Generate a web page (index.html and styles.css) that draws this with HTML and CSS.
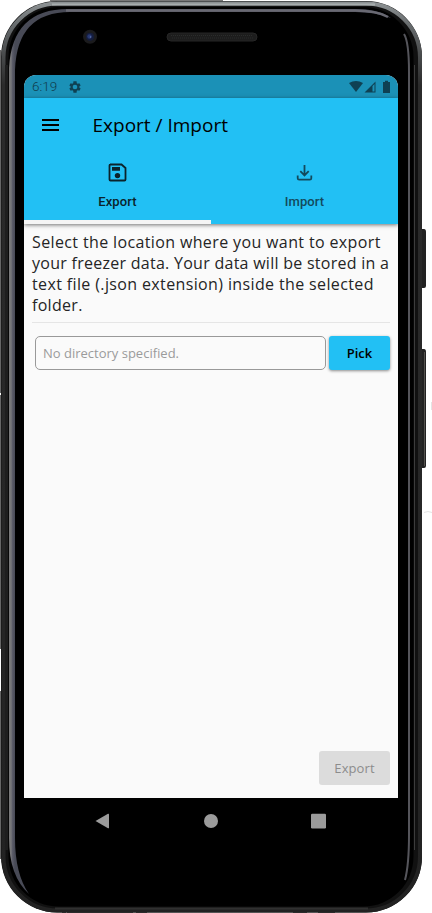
FILE: index.html
```html
<!DOCTYPE html>
<html lang="en">
<head>
<meta charset="utf-8">
<title>Export / Import</title>
<link rel="stylesheet" href="styles.css">
</head>
<body>
<div class="phone">
  <svg class="bezel" width="432" height="913" viewBox="0 0 432 913" aria-hidden="true">
    <defs>
      <linearGradient id="topRim" x1="0" y1="0" x2="0" y2="1">
        <stop offset="0" stop-color="#8b9092"/><stop offset=".025" stop-color="#666a6c"/><stop offset=".09" stop-color="#2b2b2b"/><stop offset="1" stop-color="#222"/>
      </linearGradient>
      <linearGradient id="leftRail" gradientUnits="userSpaceOnUse" x1="9" y1="0" x2="15" y2="0"><stop offset="0" stop-color="#777"/><stop offset=".35" stop-color="#77777a"/><stop offset=".55" stop-color="#5c5d69"/><stop offset="1" stop-color="#484a56"/></linearGradient>
    </defs>
    <path d="M0 50V393M0 395V649M0 691V859" stroke="#666" stroke-width="2"/>
    <path d="M50 .5H223" stroke="#777"/>
    <path d="M422 229h2q2 0 2 3v54q0 2-2 2h-2zM422 349h2q2 0 2 3v114q0 2-2 2h-2z" fill="#222"/>
    <path d="M424.500 352v114" stroke="#55534f"/>
    <path d="M431.500 402v8M424 512.500q4-2 8 0" stroke="#e4e4e4" fill="none"/>
    <rect x="1" y="1" width="421" height="911.500" rx="56" fill="#111"/>
    <rect x="3.500" y="3.500" width="416.500" height="907" rx="54" fill="none" stroke="url(#topRim)" stroke-width="4"/>
    <path d="M52 4.500H375" stroke="#a7adae" stroke-width="2"/>
    <path d="M6.500 65V850" stroke="#1e1e1e" stroke-width="3"/>
    <rect x="8.500" y="7" width="405" height="899.500" rx="50" fill="#000"/>
    <path d="M9 68Q12 9 68 9H355Q379 9 391 18Q376 12 355 12H70Q17 12 15 70V838Q15 874 29 894Q9 876 9 838Z" fill="url(#leftRail)"/>
    <path d="M66 10.500H355Q376 10.500 388 17" fill="none" stroke="#696973" stroke-width="2.500"/>
    <path d="M404 34Q409 42 409 72V835Q409 865 405 880" fill="none" stroke="#55555b" stroke-width="2"/>
    <path d="M414.500 65V850" stroke="#3c3c3c"/>
    <path d="M55 908.500H368" stroke="#303030" stroke-width="2"/>
    <path d="M62 912.500h4M67 912.500h66M136 912.500h11M293 912.500h14M318 912.500h17" stroke="#2b2b2b"/>
    <circle cx="90" cy="36.700" r="7" fill="#1b1b1d"/>
    <circle cx="90" cy="36.700" r="4" fill="#151d3c"/>
    <circle cx="89.500" cy="36.500" r="2.200" fill="#273873"/>
    <circle cx="90.500" cy="37" r=".8" fill="#6478ad"/>
    <rect x="167" y="33" width="90" height="8" rx="4" fill="#1d1d1d" stroke="#262626"/>
    <path d="M171 35.500H253M172 38H253" stroke="#2b2d2c" stroke-dasharray="1 1"/>
  </svg>

  <main class="screen">
    <div class="status">
      <span class="clock">6:19</span>
      <svg class="gear" width="14" height="14" viewBox="0 0 24 24"><path fill="currentColor" fill-rule="evenodd" d="M19.400 13a7.500 7.500 0 0 0 0-2l2.300-1.700-2.200-3.900-2.700 1.100-1.700-1L14.700 2H9.300l-.4 3.500-1.700 1-2.700-1.100-2.200 3.900L4.600 11a7.500 7.500 0 0 0 0 2l-2.300 1.700 2.200 3.900 2.700-1.100 1.700 1 .4 3.500h5.400l.4-3.500 1.700-1 2.700 1.100 2.200-3.900zM12 16a4 4 0 1 1 0-8 4 4 0 0 1 0 8"/></svg>
      <svg class="signals" width="42" height="14" viewBox="0 0 42 14"><g fill="currentColor"><path d="M0 3Q7-1 14 3L7 12z"/><path d="M15.500 12.500 26.500 1.500v11zM23.500 6v5.500h2V4z" fill-rule="evenodd"/><path d="M34 2h2V.8h3V2h2v11h-7z"/></g></svg>
    </div>
    <header class="appbar">
      <div class="toolbar">
        <svg class="menu" width="17" height="12" viewBox="0 0 17 12"><path d="M0 1h17M0 6h17M0 11h17" stroke="#000" stroke-width="2"/></svg>
        <h1 class="title">Export / Import</h1>
      </div>
      <nav class="tabs">
        <div class="tab active">
          <svg width="21" height="21" viewBox="0 0 21 21"><path d="M3 2.500h11.500L18.500 6v11.500q0 1-1 1H3.500q-1 0-1-1V3.500q0-1 1-1z" fill="none" stroke="currentColor" stroke-width="1.800"/><path d="M5 5h8v3.700h-8z" fill="currentColor"/><circle cx="10.500" cy="13.600" r="2.700" fill="currentColor"/></svg>
          <span class="label">Export</span>
        </div>
        <div class="tab">
          <svg width="21" height="21" viewBox="0 0 21 21"><path d="M10.500 3v10M6.300 9.200l4.200 4.200 4.200-4.200M3.700 13.500v2.700q0 1.500 1.500 1.500h10.600q1.500 0 1.500-1.500v-2.700" fill="none" stroke="currentColor" stroke-width="1.800"/></svg>
          <span class="label">Import</span>
        </div>
      </nav>
    </header>
    <section class="content">
      <p class="intro">
        <span class="line one">Select the location where you want to export</span>
        <span class="line two">your freezer data. Your data will be stored in a</span>
        <span class="line three">text file (.json extension) inside the selected</span>
        <span class="line four">folder.</span>
      </p>
      <div class="picker">
        <div class="field"><span class="hint">No directory specified.</span></div>
        <button class="btn pick">Pick</button>
      </div>
      <button class="btn export" disabled>Export</button>
    </section>
  </main>
  <div class="navbar">
    <svg width="232" height="16" viewBox="0 0 232 16"><g fill="#9b9b9b"><path d="M.5 8 13 .8Q14 .3 14 1.500v13q0 1.200-1 .7z"/><circle cx="116" cy="8" r="7"/><rect x="216" y=".7" width="15" height="14.700" rx="1.200"/></g></svg>
  </div>
</div>
</body>
</html>
```
FILE: styles.css
```css
* { box-sizing: border-box; }
body { margin: 0; background: #fff; font-family: "Open Sans", sans-serif; }
.phone { position: relative; width: 432px; height: 913px; padding: 75px 34px 0 24px; overflow: hidden; }
.bezel { position: absolute; top: 0; left: 0; }
.screen { position: relative; display: flex; flex-direction: column; width: 374px; height: 723px; background: #fafafa; border-radius: 12px 12px 0 0; overflow: hidden; }
.status { display: flex; align-items: center; height: 23px; flex: none; padding: 0 7px 0 8px; background: #1b91b7; color: #0f4153; }
.clock { width: 36px; font: 300 13.5px/23px Roboto, sans-serif; color: #103c4c; }
.signals { margin-left: auto; }
.appbar { height: 126px; flex: none; background: #22c0f4; box-shadow: 0 1px 4px rgba(0,0,0,.55); }
.toolbar { display: flex; align-items: center; height: 54px; padding-left: 18px; }
.title { margin: 0 0 0 33.5px; font-size: 19px; line-height: 26px; font-weight: 400; color: #000; white-space: nowrap; }
.tabs { display: grid; grid-template-columns: 1fr 1fr; height: 72px; }
.tab { display: flex; flex-direction: column; align-items: center; padding-top: 10px; color: #134a5c; }
.tab.active { color: #0b232b; border-bottom: 4px solid #f5f5f5; }
.label { margin-top: 10px; font: 500 13px/18px Roboto, sans-serif; letter-spacing: .1px; }
.content { display: flex; flex-direction: column; flex: 1; padding: 8px 8px 13px; }
.intro { margin: 0; height: 91px; border-bottom: 1px solid #e5e5e5; font-size: 16px; line-height: 21px; color: #252525; }
.line { display: block; white-space: nowrap; }
.one { letter-spacing: .37px; }
.two { letter-spacing: .27px; }
.three { letter-spacing: .37px; }
.four { letter-spacing: .3px; }
.picker { display: flex; gap: 3px; margin-top: 13px; padding-left: 3px; }
.field { display: flex; align-items: center; width: 291px; height: 34px; padding-left: 7px; border: 1px solid #999; border-radius: 5px; color: #9b9b9b; font-size: 13px; }
.btn { border: 0; padding: 0; height: 34px; border-radius: 3px; font: 500 13px/34px "Open Sans", sans-serif; }
.pick { width: 61px; background: #22c0f4; color: #000; font-weight: 600; box-shadow: 0 1px 3px rgba(0,0,0,.45); }
.export { width: 71px; margin-top: auto; align-self: flex-end; background: #dcdcdc; color: #8c8c8c; letter-spacing: .1px; }
.navbar { position: relative; display: flex; padding: 15px 0 0 71px; }
```
